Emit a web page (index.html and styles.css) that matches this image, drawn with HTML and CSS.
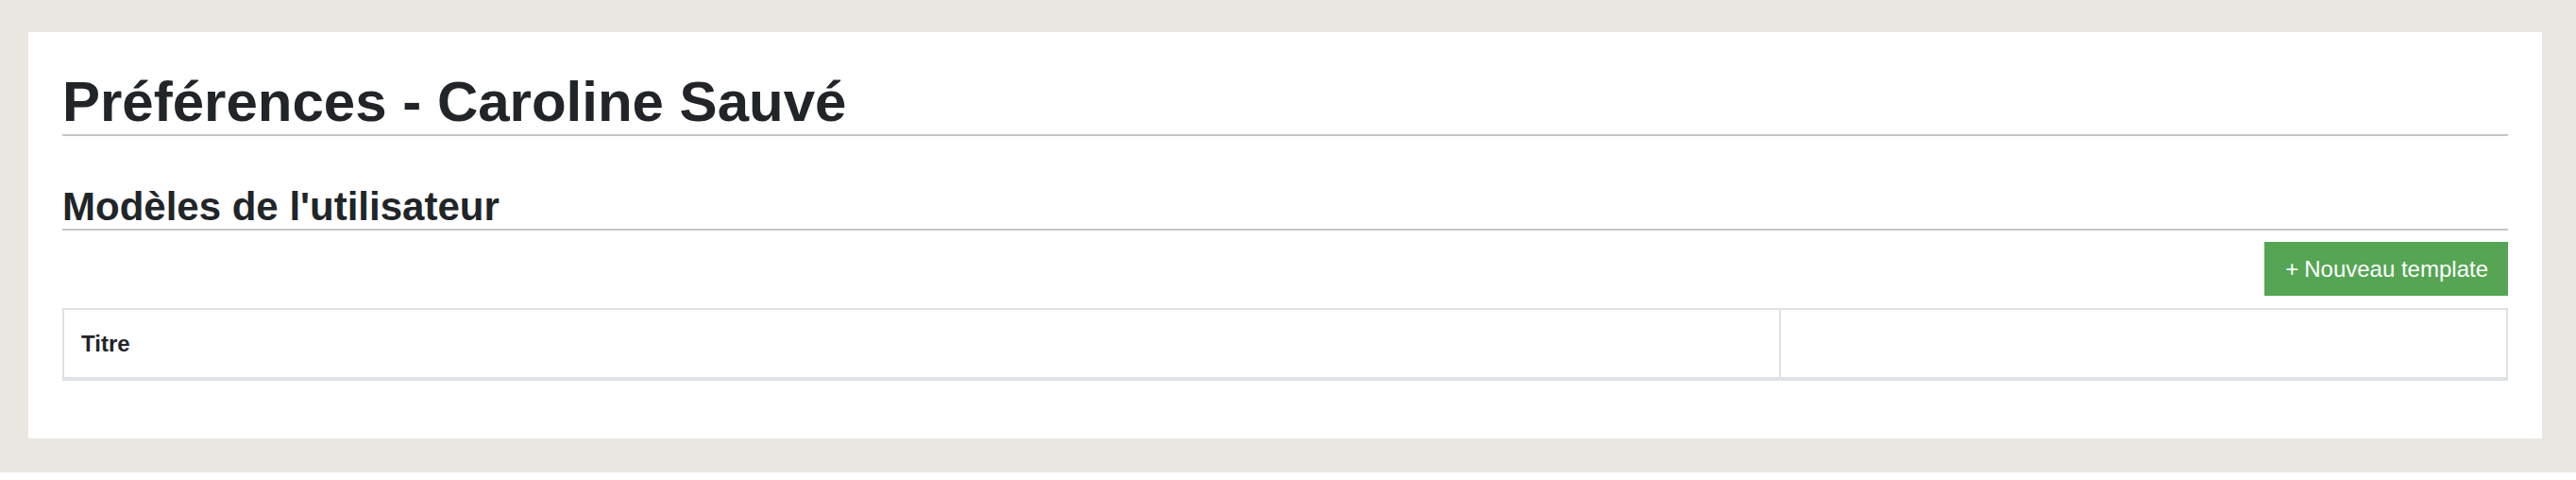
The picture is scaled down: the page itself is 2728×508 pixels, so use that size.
FILE: index.html
```html
<!DOCTYPE html>
<html>
    <head>
        <meta charset="utf-8">
        <title>Préférences</title>
        <link rel="stylesheet" href="styles.css">
    </head>
    <body>
        <div class="page">
            <div class="panel">
                <h1 class="title">Préférences - Caroline Sauvé</h1>
                <h3 class="subtitle">Modèles de l'utilisateur</h3>
                <div class="actions">
                    <button type="button" class="btn-new"><span class="plus">+</span>Nouveau template</button>
                </div>
                <div class="tbl">
                    <div class="cell first">Titre</div>
                    <div class="cell"></div>
                </div>
            </div>
        </div>
    </body>
</html>
```

FILE: styles.css
```css
body{
    margin: 0;
    background-color: #fff;
    font-family: "Liberation Sans", Arial, sans-serif;
    color: #212529;
}
.page{
    background-color: #e8e7e2;
    height: 500px;
    box-sizing: border-box;
    padding: 34px 36px 0 30px;
}
.panel{
    background-color: #fff;
    height: 430px;
    box-sizing: border-box;
    padding: 39px 36px 0 36px;
}
.title{
    margin: 0;
    font-size: 60px;
    font-weight: bold;
    line-height: 69px;
    border-bottom: 2px solid #c5c5c5;
}
.subtitle{
    margin: 51px 0 0 0;
    font-size: 42px;
    font-weight: bold;
    line-height: 47px;
    border-bottom: 2px solid #c5c5c5;
}
.actions{
    display: flex;
    justify-content: flex-end;
    margin-top: 12px;
}
.btn-new{
    height: 57px;
    padding: 0 21px 0 22px;
    border: 0;
    border-radius: 0;
    background-color: #55a554;
    color: #fff;
    font-family: "Liberation Sans", Arial, sans-serif;
    font-size: 24px;
    line-height: 57px;
}
.plus{
    margin-right: 6px;
}
.tbl{
    display: grid;
    grid-template-columns: 1fr 768px;
    margin-top: 13px;
    border: 2px solid #dee2e6;
    border-bottom-width: 4px;
}
.cell{
    height: 71px;
    box-sizing: border-box;
    padding: 18px 18px;
    font-size: 24px;
    font-weight: bold;
    line-height: 35px;
}
.first{
    border-right: 2px solid #dee2e6;
}
```
